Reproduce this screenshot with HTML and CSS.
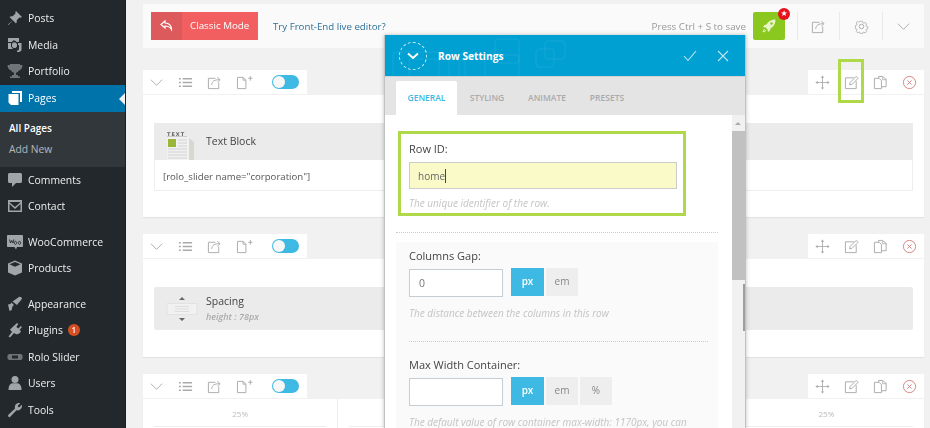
FILE: index.html
```html
<!DOCTYPE html>
<html lang="en">
<head>
<meta charset="utf-8">
<title>Row Settings</title>
<link rel="stylesheet" href="styles.css">
</head>
<body>
<svg class="defs" width="0" height="0" aria-hidden="true">
  <defs>
    <symbol id="i-chev" viewBox="0 0 16 16"><path d="M2 5l6 6 6-6" fill="none" stroke="currentColor" stroke-width="1"/></symbol>
    <symbol id="i-list" viewBox="0 0 16 16"><path d="M1 4h2M1 8h2M1 12h2M5 4h10M5 8h10M5 12h10" fill="none" stroke="currentColor" stroke-width="1.400"/></symbol>
    <symbol id="i-share" viewBox="0 0 16 16"><path d="M9 3.500H1.500v11h11V8M5 10.500c.5-4 3-5.500 8-5.500M11 2.500l3 2.500-3 2.500" fill="none" stroke="currentColor" stroke-width="1"/></symbol>
    <symbol id="i-pageplus" viewBox="0 0 18 16"><path d="M1.500 2.500h6l3 3v9h-9zM7.500 2.500v3h3M13 3.500h4.500M15.250 1v5" fill="none" stroke="currentColor" stroke-width="1"/></symbol>
    <symbol id="i-move" viewBox="0 0 16 16"><path d="M8 1v14M1 8h14" stroke="currentColor" fill="none" stroke-width=".9"/><path d="M8 .5l1.800 2.300H6.200zM8 15.500l1.800-2.300H6.200zM.5 8l2.300-1.800v3.600zM15.500 8l-2.300-1.800v3.600z" fill="currentColor"/></symbol>
    <symbol id="i-edit" viewBox="0 0 16 16"><path d="M10.500 3H1.500v11.500H13V6.500" fill="none" stroke="currentColor"/><path d="M6 10.500l.6-2.600 6.400-6.400 2 2-6.400 6.400z" fill="none" stroke="currentColor"/></symbol>
    <symbol id="i-copy" viewBox="0 0 16 16"><path d="M1.500 3.500h5l2.500 2.500v8.500H1.500zM6 3.500V1.500h4l4 3v8h-5" fill="none" stroke="currentColor"/><path d="M10 2v3h4" fill="none" stroke="currentColor" stroke-width=".8"/></symbol>
    <symbol id="i-close" viewBox="0 0 16 16"><circle cx="8" cy="8" r="6.500" fill="none" stroke="currentColor" stroke-width="1"/><path d="M5.800 5.800l4.400 4.400M10.200 5.800l-4.400 4.400" stroke="currentColor" fill="none" stroke-width="1"/></symbol>
    <symbol id="i-gear" viewBox="0 0 16 16"><circle cx="8" cy="8" r="2.400" fill="none" stroke="currentColor"/><path d="M6.700 1.500h2.600l.4 1.900 1.300.6 1.700-1 1.800 1.900-1 1.600.6 1.300 1.800.4v2.600l-1.800.4-.6 1.300 1 1.600-1.800 1.900-1.700-1-1.300.5-.4 1.400H6.700l-.4-1.500-1.300-.5-1.700 1-1.800-1.900 1-1.600-.6-1.300-1.400-.4V6.800l1.400-.4.6-1.300-1-1.600L3 1.600l1.700 1 1.300-.6z" transform="translate(1.100 1.100) scale(.86)" fill="none" stroke="currentColor"/></symbol>
  </defs>
</svg>

<div class="app">
  <nav class="side">
    <a class="item"><svg class="mi" viewBox="0 0 16 16"><path d="M9 1l6 6-1.500.8-.8-.5-3 3c.3 1.300 0 2.400-.7 3.200L5.800 10.300 1.500 15l-.5-.5 4.700-4.300L2.500 7c.8-.7 1.900-1 3.200-.7l3-3-.5-.8z"/></svg>Posts</a>
    <a class="item"><svg class="mi" viewBox="0 0 16 16"><path d="M1 1h11v4h-2.500L8 3.500H6L5 5H1zM1 6h3v3.500L6 12H1zM6 5.500h2.500L10 7v2.500L8.500 11H6.500L5 9.500V7zM11 6h3.500v6.500c0 1.300-1.200 2.500-3 2.500H10v-1.500c1 0 2-.5 2-1.500V8h-1z"/></svg>Media</a>
    <a class="item"><svg class="mi dim" viewBox="0 0 16 16"><path d="M3 1h10v1h2.500c0 3-1.500 5-3.500 5.500C11.300 8.800 10 9.500 9 9.700V12h2v1.500H13V15H3v-1.500h2V12h2V9.700C6 9.500 4.700 8.800 4 7.500 2 7 .5 5 .5 2H3z"/></svg>Portfolio</a>
    <a class="item on"><svg class="mi" viewBox="0 0 16 16"><path d="M5 1h10v11h-2V3H5zM1.500 4H11.500v11H4L1.500 12.500z"/></svg>Pages</a>
    <div class="sub">
      <a class="sub-link now">All Pages</a>
      <a class="sub-link">Add New</a>
    </div>
    <a class="item"><svg class="mi" viewBox="0 0 16 16"><path d="M2.500 1h11c.8 0 1.500.7 1.500 1.500v7c0 .8-.7 1.500-1.500 1.500H9l-4 4v-4H2.500C1.700 11 1 10.300 1 9.500v-7C1 1.700 1.700 1 2.500 1z"/></svg>Comments</a>
    <a class="item"><svg class="mi" viewBox="0 0 16 16"><path fill-rule="evenodd" d="M1 2h14v12H1zM2.800 4.500L8 9l5.200-4.500v-.5H2.800zM2.500 6v6.500h11V6L8 11z"/></svg>Contact</a>
    <div class="sep"></div>
    <a class="item"><svg class="mi woo" viewBox="0 0 18 16"><path d="M2 1h14c.6 0 1 .4 1 1v10c0 .6-.4 1-1 1h-5l-1 2.500L8.500 13H2c-.6 0-1-.4-1-1V2c0-.6.4-1 1-1z"/><path d="M3.500 5.500l1 3.500 1.200-2.500L7 9l.8-3.500M9.500 7.300a1.200 1.500 0 1 0 .01 0M13.500 7.300a1.200 1.500 0 1 0 .01 0" fill="none" stroke="#23282d" stroke-width=".9"/></svg>WooCommerce</a>
    <a class="item"><svg class="mi" viewBox="0 0 16 16"><path d="M8 .5l7 3v9l-7 3-7-3v-9zM2.500 4.300L8 6.800l5.500-2.500L8 2z" fill-rule="evenodd"/></svg>Products</a>
    <div class="sep"></div>
    <a class="item"><svg class="mi" viewBox="0 0 16 16"><path d="M1 8.500l2.500-.5 1-1.500L7 9 5.500 10.300l-.8 3.700L2.500 15zM5.500 5.500L12 1c1-.5 3 .5 3 1.500-1 2-3 3.500-5 6.500z"/></svg>Appearance</a>
    <a class="item"><svg class="mi" viewBox="0 0 16 16"><path d="M10 1l1.300 1-2 3 2.200 1.500 2.200-2.500L15 5l-2.500 3 1.500 1c-.5 2-2.500 3.500-4.800 3.200L7 11l-4 4.500-1.500-1L5 10 3 7.500z"/></svg>Plugins<span class="count">1</span></a>
    <a class="item"><svg class="mi dim" viewBox="0 0 16 16"><path fill-rule="evenodd" d="M2 5h12l1.500 1.200v3.600L14 11H2L.5 9.800V6.200zM5 6.500v3h6v-3z"/></svg>Rolo Slider</a>
    <a class="item"><svg class="mi" viewBox="0 0 16 16"><circle cx="8" cy="4.500" r="3.500"/><path d="M1.500 15c0-4 1-6 4-6.800h5c3 .8 4 2.800 4 6.800z"/></svg>Users</a>
    <a class="item"><svg class="mi" viewBox="0 0 16 16"><path d="M1.200 13L8 6.500C7.500 4 8.500 1.500 11.500 1c.8-.1 1.300 0 1.700.2L10.500 4l1.500 1.500L14.800 2.800c.3.700.3 1.500 0 2.500-.8 2.500-3 3.500-5.300 3L3 15c-.8.8-2.500-1-1.800-2z"/></svg>Tools</a>
  </nav>

  <main class="main">
    <header class="topbar">
      <a class="classic"><span class="classic-ico"><svg viewBox="0 0 14 12" width="14" height="12"><path d="M5 1L1 4.500 5 8V6c3 0 5 .8 6.500 3.500C11.500 6 9.500 3.300 5 3z" fill="none" stroke="#fff" stroke-width="1.200"/></svg></span><span class="classic-txt">Classic Mode</span></a>
      <a class="live">Try Front-End live editor?</a>
      <span class="spacer"></span>
      <span class="press">Press Ctrl + S to save</span>
      <a class="rocket"><svg viewBox="0 0 16 16" width="16" height="16"><path d="M14.500 1.500c-4 0-7 1.500-9 5l-2 .5L2 9l2.500.5 2 2 .5 2.500 2-1.500.5-2c3.500-2 5-5 5-9z" fill="#e8f5c8"/><path d="M3.500 11l-1.500 3 3-1.500" fill="none" stroke="#e8f5c8"/><circle cx="10.500" cy="5.500" r="1.300" fill="#8ac820"/></svg><span class="star">★</span></a>
      <span class="tool-cell"><svg class="ic"><use href="#i-share"/></svg></span>
      <span class="tool-cell"><svg class="ic"><use href="#i-gear"/></svg></span>
      <span class="tool-cell"><svg class="ic"><use href="#i-chev"/></svg></span>
    </header>

    <section class="row">
      <div class="bar">
        <div class="tools left">
          <svg class="ic"><use href="#i-chev"/></svg><svg class="ic"><use href="#i-list"/></svg><svg class="ic"><use href="#i-share"/></svg><svg class="ic wide"><use href="#i-pageplus"/></svg><span class="toggle"></span>
        </div>
        <div class="tools right">
          <svg class="ic"><use href="#i-move"/></svg><svg class="ic"><use href="#i-edit"/></svg><svg class="ic"><use href="#i-copy"/></svg><svg class="ic red"><use href="#i-close"/></svg>
          <span class="mark"></span>
        </div>
      </div>
      <div class="body b1">
        <div class="el-head">
          <svg class="el-ico" viewBox="0 0 28 30" width="28" height="30"><text x="0" y="5.500" class="el-ico-t">TEXT</text><path d="M0 7h20" stroke="#999" stroke-width=".8"/><path d="M0 7h22v23H0z" fill="#f1f1f1"/><path d="M22 8l5 4v18h-5z" fill="#d8d8d0"/><path d="M1 9h8v8H1z" fill="#9bb53a"/><path d="M11 10h9M11 13h9M11 16h9M1 19h19M1 22h19M1 25h19M1 28h19" stroke="#ccc" stroke-width=".8"/></svg>
          <span class="el-title">Text Block</span>
        </div>
        <div class="el-content">[rolo_slider name="corporation"]</div>
      </div>
    </section>

    <section class="row">
      <div class="bar">
        <div class="tools left">
          <svg class="ic"><use href="#i-chev"/></svg><svg class="ic"><use href="#i-list"/></svg><svg class="ic"><use href="#i-share"/></svg><svg class="ic wide"><use href="#i-pageplus"/></svg><span class="toggle"></span>
        </div>
        <div class="tools right">
          <svg class="ic"><use href="#i-move"/></svg><svg class="ic"><use href="#i-edit"/></svg><svg class="ic"><use href="#i-copy"/></svg><svg class="ic red"><use href="#i-close"/></svg>
        </div>
      </div>
      <div class="body b2">
        <div class="spacing">
          <svg class="sp-ico" viewBox="0 0 32 28" width="32" height="28"><path d="M16 2l3 3h-6zM16 26l3-3h-6z" fill="#666"/><path d="M1 8.500h30v11H1z" fill="#f1f1f1" stroke="#e2e2e2"/><path d="M9 11.500h14M9 14h14M9 16.500h14" stroke="#ddd"/></svg>
          <div>
            <div class="el-title">Spacing</div>
            <div class="sp-sub">height : 78px</div>
          </div>
        </div>
      </div>
    </section>

    <section class="row">
      <div class="bar">
        <div class="tools left">
          <svg class="ic"><use href="#i-chev"/></svg><svg class="ic"><use href="#i-list"/></svg><svg class="ic"><use href="#i-share"/></svg><svg class="ic wide"><use href="#i-pageplus"/></svg><span class="toggle"></span>
        </div>
        <div class="tools right">
          <svg class="ic"><use href="#i-move"/></svg><svg class="ic"><use href="#i-edit"/></svg><svg class="ic"><use href="#i-copy"/></svg><svg class="ic red"><use href="#i-close"/></svg>
        </div>
      </div>
      <div class="body cols">
        <div class="col"><div class="col-in">25%</div></div>
        <div class="col"><div class="col-in"></div></div>
        <div class="col"><div class="col-in"></div></div>
        <div class="col"><div class="col-in">25%</div></div>
      </div>
    </section>
  </main>

  <aside class="modal">
    <div class="m-head">
      <svg class="m-pattern" viewBox="0 0 362 41" width="362" height="41" fill="none" stroke="#fff" stroke-opacity=".08">
        <rect x="8" y="17" width="46" height="40" rx="3"/><rect x="24" y="24" width="50" height="40" rx="3"/><rect x="64" y="24" width="36" height="40" rx="3"/><rect x="110" y="4" width="24" height="24" rx="3"/><rect x="80" y="20" width="54" height="44" rx="3"/><rect x="151" y="14" width="18" height="18" rx="3"/><rect x="160" y="6" width="20" height="18" rx="3"/>
      </svg>
      <span class="m-circle"><svg viewBox="0 0 12 8" width="12" height="8"><path d="M1 1.500l5 4.500 5-4.500" fill="none" stroke="#fff" stroke-width="2"/></svg></span>
      <span class="m-title">Row Settings</span>
      <span class="spacer"></span>
      <svg class="m-act" viewBox="0 0 14 12"><path d="M1 6l4 4.500L13 1" fill="none" stroke="currentColor" stroke-width="1.100"/></svg>
      <svg class="m-act x" viewBox="0 0 12 12"><path d="M1 1l10 10M11 1L1 11" fill="none" stroke="currentColor" stroke-width="1.100"/></svg>
    </div>
    <div class="m-tabs">
      <span class="tab active">GENERAL</span>
      <span class="tab">STYLING</span>
      <span class="tab">ANIMATE</span>
      <span class="tab">PRESETS</span>
    </div>
    <div class="m-body">
      <div class="m-scroll">
        <form class="idbox">
          <div class="lab">Row ID:</div>
          <div class="idinput">home<span class="caret"></span></div>
          <div class="hint">The unique identifier of the row.</div>
        </form>
        <div class="dots"></div>
        <div class="panel">
          <div class="lab">Columns Gap:</div>
          <div class="fieldrow">
            <span class="num">0</span>
            <span class="unit sel">px</span><span class="unit">em</span>
          </div>
          <div class="hint h2">The distance between the columns in this row</div>
          <div class="dots inner"></div>
          <div class="lab">Max Width Container:</div>
          <div class="fieldrow">
            <span class="num"></span>
            <span class="unit sel">px</span><span class="unit">em</span><span class="unit">%</span>
          </div>
          <div class="hint h3">The default value of row container max-width: 1170px, you can</div>
        </div>
      </div>
      <div class="sb"><span class="sb-up"></span><span class="sb-thumb"></span></div>
      <span class="sb-page"></span>
    </div>
  </aside>
</div>
</body>
</html>
```

FILE: styles.css
```css
* { box-sizing: border-box; }
html, body { margin: 0; height: 428px; overflow: hidden; }
body { font-family: "Open Sans", "Noto Sans", sans-serif; background: #f1f1f1; color: #444; font-size: 12px; }
.defs { position: absolute; }
.app { display: flex; height: 428px; position: relative; overflow: hidden; filter: blur(.3px); }
.spacer { flex: 1; }

/* sidebar */
.side { width: 126px; flex: none; background: #23282d; padding-top: 5px; border-right: 1px solid #1b1f23; }
.item { display: flex; align-items: center; height: 26.500px; color: #eee; font-size: 10.400px; padding-left: 7px; position: relative; }
.mi { width: 16px; height: 16px; fill: #a0a5aa; margin-right: 5px; flex: none; }
.mi.dim { fill: #6f7479; }
.mi.woo { width: 18px; margin-left: -1px; margin-right: 4px; }
.item.on { background: #0073aa; color: #fff; height: 27px; }
.item.on .mi { fill: #fff; }
.item.on::after { content: ""; position: absolute; right: 0; top: 8px; border: 6px solid transparent; border-right-color: #f1f1f1; border-left: 0; }
.sub { background: #32373c; height: 55px; padding: 6px 0 0 9px; }
.sub-link { display: block; font-size: 10.300px; line-height: 21.500px; color: #b4b9be; }
.sub-link.now { color: #fff; font-weight: 600; font-size: 10px; }
.sep { height: 9px; }
.count { width: 12px; height: 12px; border-radius: 50%; background: #d54e21; color: #fff; font-size: 8px; line-height: 12px; text-align: center; margin-left: 5px; font-weight: 600; }

/* main */
.main { flex: 1; padding: 4px 6px 0 17px; min-width: 0; }
.topbar { display: flex; align-items: center; height: 44px; background: #fafafa; padding: 0 0 0 8px; margin-bottom: 22px; }
.classic { display: flex; width: 107px; height: 28px; background: #f15f60; color: #fff; font-size: 9.800px; line-height: 27px; white-space: nowrap; }
.classic-ico { width: 31px; background: #dd5a5c; display: flex; align-items: center; justify-content: center; }
.classic-txt { padding-left: 8px; }
.live { color: #2a6f99; font-size: 9.700px; margin-left: 15px; }
.press { color: #999; font-size: 9.800px; margin-right: 7px; }
.rocket { width: 32px; height: 28px; background: #8ac820; border-radius: 2px; display: flex; align-items: center; justify-content: center; position: relative; }
.star { position: absolute; right: -5px; top: -4px; width: 12px; height: 12px; border-radius: 50%; background: #e8101c; color: #fff; font-size: 8px; line-height: 12px; text-align: center; font-family: "DejaVu Sans", sans-serif; }
.tool-cell { width: 42.330px; height: 28px; display: flex; align-items: center; justify-content: center; border-left: 1px solid #eaeaea; color: #999; }
.rocket + .tool-cell { margin-left: 12px; }
.ic { width: 15px; height: 15px; color: #aaa; flex: none; }
.ic.wide { width: 17px; }
.ic.red { color: #d08080; }

.row { margin-bottom: 17px; }
.bar { display: flex; justify-content: space-between; height: 25px; }
.tools { display: flex; align-items: center; background: #fff; height: 24px; position: relative; }
.tools.left { width: 164px; padding-left: 6px; gap: 14px; }
.tools.right { width: 116px; padding-left: 7px; gap: 14px; }
.toggle { width: 27px; height: 14px; border-radius: 7px; background: #3db9e3; position: relative; margin-left: 5px; }
.toggle::before { content: ""; position: absolute; left: 1px; top: 1px; width: 12px; height: 12px; border-radius: 50%; background: #f7f7f7; }
.mark { position: absolute; left: 30px; top: -11px; width: 26px; height: 44px; border: 3px solid #b0d94a; }

.body { background: #fff; box-shadow: 0 1px 1px rgba(0,0,0,.06); }
.b1 { height: 122px; padding: 28px 11px 0; }
.b2 { height: 98px; padding: 28px 11px 0; }
.el-head { height: 37px; background: #ebebeb; display: flex; align-items: flex-end; }
.el-ico { margin: 0 11px 0 13px; flex: none; }
.el-ico-t { font-size: 5px; letter-spacing: 1px; fill: #666; font-family: "DejaVu Sans", sans-serif; font-weight: bold; }
.el-title { font-size: 10.500px; color: #444; }
.el-head .el-title { align-self: center; margin-bottom: 1px; }
.el-content { height: 31px; border: 1px solid #eee; border-top: 0; font-size: 9.650px; color: #555; line-height: 33px; padding-left: 8px; }
.spacing { height: 43px; background: #ebebeb; border-radius: 2px; display: flex; align-items: center; padding-left: 12px; }
.sp-ico { margin-right: 8px; flex: none; }
.sp-sub { font-size: 9px; font-style: italic; font-weight: 600; color: #aaa; margin-top: 2px; }
.cols { display: grid; grid-template-columns: repeat(4, 1fr); height: 40px; }
.col { border-right: 1px solid #eee; padding: 0 11px; }
.col:last-child { border-right: 0; }
.col-in { height: 28px; border-bottom: 1px solid #eee; text-align: center; font-size: 8px; color: #bbb; padding-top: 9px; }

/* modal */
.modal { position: absolute; left: 384px; top: 35px; width: 362px; height: 393px; background: #fff; border: 1px solid #bfc3c6; border-width: 0 1px; box-shadow: 0 0 4px rgba(0,0,0,.25); display: flex; flex-direction: column; }
.m-head { height: 41px; background: #00a0d2; display: flex; align-items: center; color: #fff; position: relative; padding-left: 14px; flex: none; }
.m-pattern { position: absolute; left: 0; top: 0; }
.m-circle { width: 28px; height: 28px; border-radius: 50%; border: 1px dashed rgba(255,255,255,.8); display: flex; align-items: center; justify-content: center; position: relative; }
.m-title { font-weight: 700; font-size: 10.200px; margin-left: 11px; position: relative; }
.m-act { width: 14px; height: 12px; color: #bfe6f5; position: relative; margin-right: 20px; }
.m-act.x { width: 12px; margin-right: 16px; }
.m-tabs { height: 39px; flex: none; background: #e4e4e4; border-top: 1px solid #cfd3d6; display: flex; align-items: flex-end; padding-left: 11px; }
.tab { height: 34px; line-height: 34px; width: 60px; text-align: center; font-size: 8.500px; font-weight: 600; color: #aaa; }
.tab.active { width: 61px; background: #fff; color: #3db9e3; border-radius: 2px 2px 0 0; }
.m-body { flex: 1; position: relative; display: flex; min-height: 0; }
.m-scroll { flex: 1; min-width: 0; overflow: hidden; padding: 16px 14px 0 11px; }
.idbox { width: 288px; height: 85px; border: 3px solid #b0d94a; margin: 0 0 0 2px; padding: 8px 6px 0 8px; }
.lab { font-size: 11px; color: #444; line-height: 14px; }
.idinput { height: 27px; margin-top: 6px; background: #f9fac8; border: 1px solid #ccc; font-size: 10px; color: #666; padding-left: 8px; display: flex; align-items: center; }
.caret { width: 1px; height: 14px; background: #444; }
.hint { font-size: 10px; font-style: italic; color: #c4c4c4; line-height: 13px; margin-top: 8px; white-space: nowrap; }
.dots { border-top: 1px dotted #ccc; margin: 16px 0 9px; }
.dots.inner { margin: 21px 10px 16px 0; }
.panel { background: #fafafa; height: 300px; padding: 7px 0 0 13px; }
.fieldrow { display: flex; align-items: flex-start; gap: 2px; margin-top: 5px; height: 29px; }
.num { width: 94px; height: 28px; background: #fff; border: 1px solid #c4ced6; font-size: 10.500px; color: #777; line-height: 27px; padding-left: 9px; margin: 1px 6px 0 0; }
.unit { width: 32px; height: 28px; background: #eee; color: #888; font-size: 10px; text-align: center; line-height: 26px; }
.unit.sel { width: 33px; background: #3db9e3; color: #fff; font-weight: 600; }
.h2 { margin-top: 10px; }
.h3 { margin-top: 10px; }
.sb { width: 13px; background: #f1f1f1; display: flex; flex-direction: column; align-items: stretch; flex: none; }
.sb-up { height: 16px; position: relative; }
.sb-up::after { content: ""; position: absolute; left: 3px; top: 7px; border: 3.500px solid transparent; border-bottom-color: #aaa; border-top: 0; }
.sb-thumb { height: 149px; background: #c1c1c1; }
.sb-page { position: absolute; right: 0; top: 169px; width: 2px; height: 47px; background: #9d9d9d; }
```
